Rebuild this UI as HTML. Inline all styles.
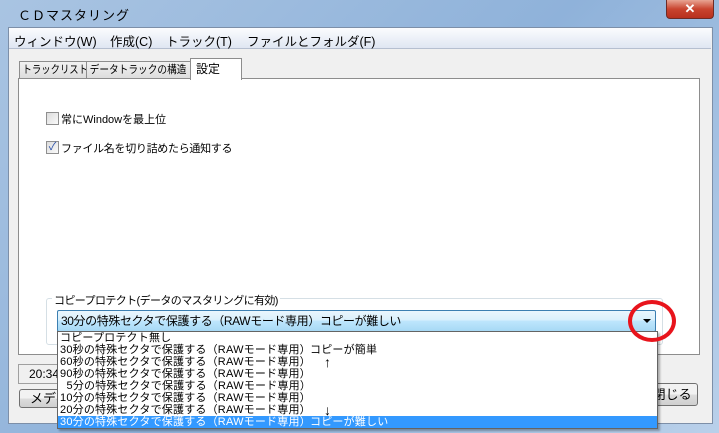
<!DOCTYPE html><html><head><meta charset="utf-8"><style>
body{margin:0;width:719px;height:433px;overflow:hidden;background:linear-gradient(135deg,#a9c4e2 0%,#8fb2da 50%,#b9d0ea 100%);font-family:"Liberation Sans","Noto Sans CJK JP",sans-serif;font-size:12px;position:relative}
.a{position:absolute;white-space:nowrap}
.title{left:18px;top:5px;font-size:13px;color:#000;letter-spacing:1px}
.close{left:666px;top:0;width:46px;height:18px;border:1px solid #6d2b26;border-top:none;border-radius:0 0 4px 4px;background:linear-gradient(#e8a493,#c9442f 50%,#b8301e);color:#fff;text-align:center;font-weight:bold;font-size:13px;line-height:17px}
.client{left:8px;top:27px;width:703px;height:395px;background:#f0f0f0;border:1px solid #7d8fa8}
.menu{left:9px;top:28px;width:702px;height:20px;background:linear-gradient(#fbfcfe,#dfe6f2);border-bottom:1px solid #b5bfd0}
.menu span{position:absolute;top:3px;font-size:12.5px}
.tab{top:61px;height:17px;border:1px solid #8d8d8d;border-bottom:none;background:linear-gradient(#f2f2f2,#dcdcdc);font-size:11px;line-height:17px;padding:0;overflow:hidden}
.panel{left:18px;top:78px;width:680px;height:275px;background:#fff;border:1px solid #8d8d8d}
.cb{width:11px;height:11px;border:1px solid #8f8f8f;background:linear-gradient(135deg,#dcdcdc,#fafafa)}
.grp{left:46px;top:298px;width:615px;height:45px;border:1px solid #d5dfe5;border-radius:3px}
.combo{left:57px;top:310px;width:597px;height:20px;border:1px solid #3c7fb1;border-radius:2px;background:linear-gradient(#eaf6fd 0%,#d9f0fc 45%,#bee6fd 50%,#a7d9f5 100%);font-size:12px;line-height:20px}
.list{left:57px;top:331px;width:599px;height:96px;background:#fff;border:1px solid #646464;box-shadow:2px 2px 2px rgba(0,0,0,.3);font-size:11px;line-height:12px;letter-spacing:.2px}
.list div{height:12px;padding-left:2px;white-space:pre;position:relative}
.list i{font-style:normal;position:absolute;left:252px;top:0}
.list b{font-weight:normal;position:absolute;left:266px;top:0;font-size:14px}
.btn{border:1px solid #707070;border-radius:3px;background:linear-gradient(#f2f2f2 50%,#dddddd 50%,#cfcfcf)}
.sx{display:inline-block;transform-origin:left center}
</style></head><body>
<div class="a title">ＣＤマスタリング</div>
<div class="a close">✕</div>
<div class="a client"></div>
<div class="a menu"><span style="left:5px">ウィンドウ(W)</span><span style="left:101px">作成(C)</span><span style="left:157px">トラック(T)</span><span style="left:238px">ファイルとフォルダ(F)</span></div>
<div class="a tab" style="left:19px;width:66px"><span class="sx" style="transform:scaleX(.85);padding-left:3px">トラックリスト</span></div>
<div class="a tab" style="left:86px;width:103px"><span class="sx" style="transform:scaleX(.88);padding-left:3px">データトラックの構造</span></div>
<div class="a panel"></div>
<div class="a tab" style="left:190px;top:58px;height:21px;width:45px;background:#fff;font-size:12px;line-height:20px;padding-left:5px">設定</div>
<div class="a cb" style="left:46px;top:112px"></div><div class="a" style="left:61px;top:111px;font-size:11px">常にWindowを最上位</div>
<div class="a cb" style="left:46px;top:141px;color:#2a4fa8;font-size:11px;line-height:11px;text-align:center">✓</div><div class="a" style="left:61px;top:140px;font-size:11px;letter-spacing:-.3px">ファイル名を切り詰めたら通知する</div>
<div class="a grp"></div>
<div class="a" style="left:52px;top:292px;background:#fff;padding:0 2px;font-size:11px;letter-spacing:-.6px">コピープロテクト(データのマスタリングに有効)</div>
<div class="a" style="left:18px;top:364px;width:40px;height:18px;border:1px solid #a0a0a0;background:#f0f0f0;line-height:18px;padding-left:10px">20:34:</div>
<div class="a btn" style="left:19px;top:389px;width:44px;height:17px;line-height:17px;padding-left:10px;font-size:13px">メディ</div>
<div class="a btn" style="left:648px;top:383px;width:48px;height:21px;line-height:21px;font-size:13px">&nbsp;閉じる</div>
<div class="a combo"><span style="padding-left:3px;letter-spacing:-.4px">30分の特殊セクタで保護する（RAWモード専用）コピーが難しい</span><span class="a" style="right:4px;top:8px;width:0;height:0;border-left:4px solid transparent;border-right:4px solid transparent;border-top:4px solid #000"></span></div>
<div class="a list">
<div>コピープロテクト無し</div>
<div>30秒の特殊セクタで保護する（RAWモード専用）<i>コピーが簡単</i></div>
<div>60秒の特殊セクタで保護する（RAWモード専用）<b>↑</b></div>
<div>90秒の特殊セクタで保護する（RAWモード専用）</div>
<div>  5分の特殊セクタで保護する（RAWモード専用）</div>
<div>10分の特殊セクタで保護する（RAWモード専用）</div>
<div>20分の特殊セクタで保護する（RAWモード専用）<b>↓</b></div>
<div style="background:#3399ff;color:#fff">30分の特殊セクタで保護する（RAWモード専用）<i>コピーが難しい</i></div>
</div>
<div class="a" style="left:628px;top:300px;width:40px;height:34px;border:4px solid #e8141c;border-radius:50%"></div>
</body></html>
